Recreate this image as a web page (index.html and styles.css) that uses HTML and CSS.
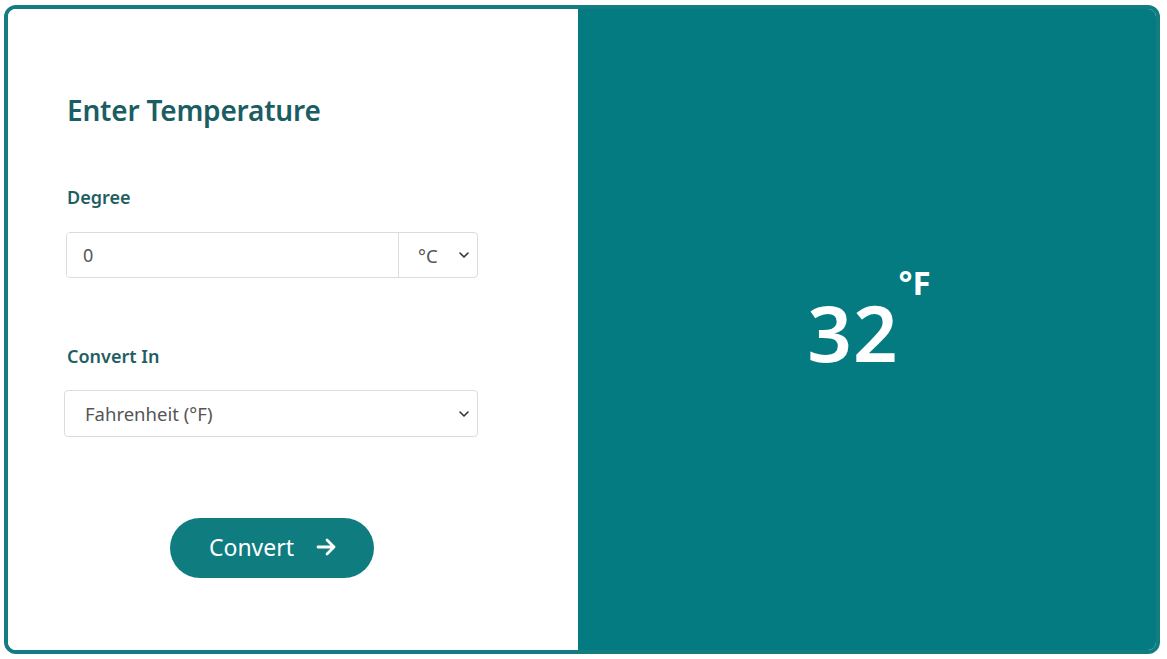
FILE: index.html
```html
<!DOCTYPE html>
<html lang="en">
<head>
<meta charset="utf-8">
<title>Temperature Converter</title>
<link rel="stylesheet" href="styles.css">
</head>
<body>
<div class="card">
  <section class="form-panel">
    <h1 class="title">Enter Temperature</h1>
    <label class="label label-degree" for="deg">Degree</label>
    <div class="input-group">
      <input id="deg" class="deg-input" type="text" value="0">
      <div class="unit-wrap">
        <select class="unit-select"><option>°C</option><option>°F</option><option>K</option></select>
        <svg class="chev" width="10" height="6" viewBox="0 0 10 6"><path d="M1 1l4 4 4-4" fill="none" stroke="#333" stroke-width="1.6" stroke-linecap="round" stroke-linejoin="round"/></svg>
      </div>
    </div>
    <label class="label label-convert" for="conv">Convert In</label>
    <div class="select-wrap">
      <select id="conv" class="conv-select"><option>Fahrenheit (°F)</option><option>Celsius (°C)</option><option>Kelvin (K)</option></select>
      <svg class="chev" width="10" height="6" viewBox="0 0 10 6"><path d="M1 1l4 4 4-4" fill="none" stroke="#333" stroke-width="1.6" stroke-linecap="round" stroke-linejoin="round"/></svg>
    </div>
    <div class="btn-row">
      <button class="convert-btn" type="button">Convert
        <svg width="21" height="18" viewBox="0 0 21 18"><path d="M2 9h16M11 2l7 7-7 7" fill="none" stroke="#fff" stroke-width="2.8" stroke-linecap="round" stroke-linejoin="round"/></svg>
      </button>
    </div>
  </section>
  <section class="result-panel">
    <div class="result"><span class="result-num">32</span><span class="result-unit">°F</span></div>
  </section>
</div>
</body>
</html>
```
FILE: styles.css
```css
* { box-sizing: border-box; }
html, body { margin: 0; padding: 0; background: #fff; }
body {
  font-family: "Noto Sans", "Open Sans", sans-serif;
  padding: 5px 7px 5px 4px;
  width: 1167px;
  height: 659px;
}
.card {
  height: 649px;
  border: 4px solid #137c81;
  border-radius: 12px;
  overflow: hidden;
  display: grid;
  grid-template-columns: 570px 1fr;
}
.form-panel {
  background: #fff;
  padding: 0 100px 0 58px;
  display: flex;
  flex-direction: column;
}
.title {
  margin: 83px 0 0 1px;
  font-size: 28px;
  font-weight: 600;
  color: #1a5e63;
  line-height: 36px;
  letter-spacing: -0.2px;
}
.label {
  display: block;
  font-size: 18px;
  font-weight: 600;
  color: #1f5e62;
  line-height: 24px;
  margin-left: 1px;
}
.label-degree { margin-top: 57px; }
.label-convert { margin-top: 66px; }
.input-group {
  margin-top: 23px;
  display: flex;
  height: 46px;
  border: 1px solid #dcdcdc;
  border-radius: 4px;
  overflow: hidden;
}
.deg-input {
  flex: 1;
  border: none;
  outline: none;
  padding: 0 16px;
  font-family: inherit;
  font-size: 18px;
  color: #555;
}
.unit-wrap {
  position: relative;
  width: 79px;
  border-left: 1px solid #dcdcdc;
}
.unit-select, .conv-select {
  appearance: none;
  -webkit-appearance: none;
  border: none;
  background: transparent;
  outline: none;
  font-family: inherit;
  font-size: 18.5px;
  color: #555;
  width: 100%;
  height: 100%;
}
.unit-select { padding: 0 0 0 19px; }
.chev {
  position: absolute;
  right: 8px;
  top: 50%;
  margin-top: -3px;
  pointer-events: none;
}
.select-wrap {
  position: relative;
  margin-top: 22px;
  margin-left: -2px;
  height: 47px;
  border: 1px solid #dcdcdc;
  border-radius: 4px;
}
.conv-select { padding: 0 20px; }
.btn-row {
  margin-top: 81px;
  display: flex;
  justify-content: center;
}
.convert-btn {
  width: 204px;
  height: 60px;
  border: none;
  border-radius: 30px;
  background: #0f7c80;
  color: #fff;
  font-family: inherit;
  font-size: 23px;
  display: flex;
  align-items: center;
  justify-content: center;
  gap: 22px;
  padding: 0 0 3px 2px;
}
.result-panel {
  background: #037b80;
  display: flex;
  align-items: center;
  justify-content: center;
}
.result {
  display: flex;
  align-items: flex-start;
  color: #fff;
  margin: 4px 0 0 4px;
}
.result-num {
  font-size: 78px;
  font-weight: 600;
  line-height: 1;
  letter-spacing: 1px;
}
.result-unit {
  font-size: 33px;
  font-weight: 700;
  line-height: 1;
  margin: -27px 0 0 0;
}
```
